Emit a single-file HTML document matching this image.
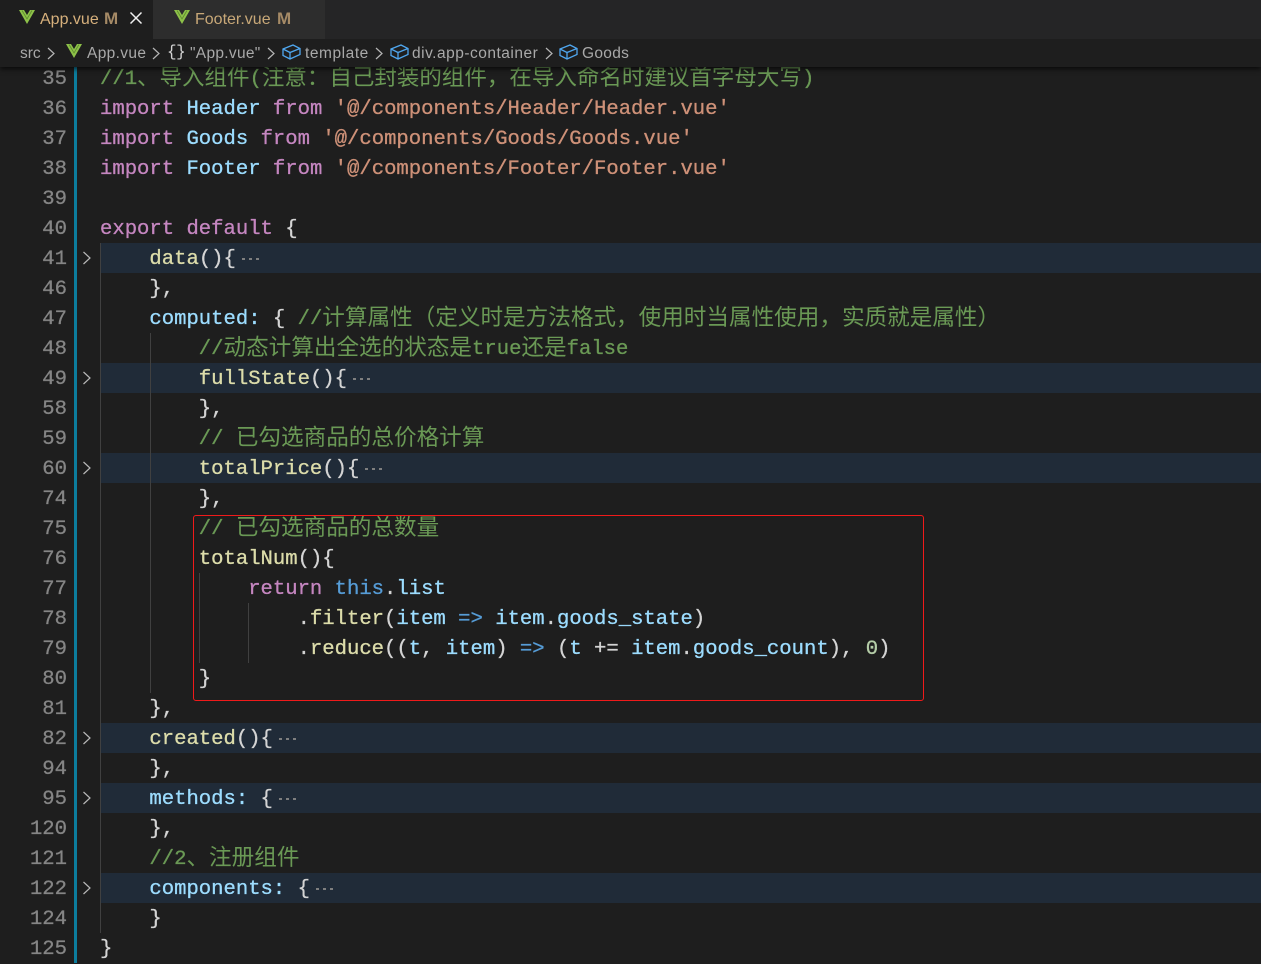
<!DOCTYPE html>
<html><head><meta charset="utf-8">
<style>
html,body{margin:0;padding:0;background:#1e1e1e;}
#r{position:relative;width:1261px;height:964px;overflow:hidden;background:#1e1e1e;}
.l{position:absolute;left:100px;height:30px;line-height:30px;margin-top:2px;white-space:pre;font-family:"Liberation Mono",monospace;font-size:20.58px;color:#d4d4d4;z-index:3;-webkit-text-stroke:.3px;}
.c{position:relative;top:1px;font-family:"Liberation Sans","Noto Sans CJK SC",sans-serif;font-size:22.6px;line-height:22px;-webkit-text-stroke:0;}
.n{position:absolute;left:0;width:67px;text-align:right;height:30px;line-height:30px;margin-top:2px;font-family:"Liberation Mono",monospace;font-size:20.58px;color:#858585;z-index:3;-webkit-text-stroke:.3px;}
.f{position:absolute;left:100px;right:0;height:30px;background:#202b38;z-index:1;}
.g{position:absolute;width:1px;background:#404040;z-index:2;}
.k{color:#c586c0}.v{color:#9cdcfe}.y{color:#dcdcaa}.s{color:#ce9178}.m{color:#6a9955}.b{color:#569cd6}.u{color:#b5cea8}
.d{position:absolute;width:18px;height:2px;background:repeating-linear-gradient(90deg,#7f7f7f 0,#7f7f7f 3px,transparent 3px,transparent 7px);z-index:3;}
.ch{position:absolute;z-index:3;}
#tabs{position:absolute;left:0;top:0;width:1261px;height:39px;background:#252526;z-index:6;}
.tab{position:absolute;top:0;height:39px;}
#bc{position:absolute;left:0;top:39px;width:1261px;height:28px;background:#1e1e1e;box-shadow:0 2px 5px rgba(0,0,0,.7);z-index:5;}
.t{position:absolute;font-family:"Liberation Sans",sans-serif;white-space:pre;}
.bt{font-size:15.5px;color:#a9a9a9;top:5px;line-height:20px;}
svg{position:absolute;overflow:visible;}
#box{position:absolute;left:193px;top:515px;width:729px;height:184px;border:1px solid #f01a1a;border-radius:3px;z-index:4;}
#bar{position:absolute;left:74px;top:63px;width:3px;height:900px;background:#0c7d9d;z-index:2;}
</style></head><body><div id="r">

<div id="tabs">
<div class="tab" style="left:0;width:153px;background:#1e1e1e"></div>
<div class="tab" style="left:153px;width:172px;background:#2d2d2d"></div>
<svg style="left:19px;top:10px" width="16" height="14" viewBox="0 0 16 14"><polygon points="0,0 5,0 8,5 11,0 16,0 8,14" fill="#8dc149"/><polyline points="3,0.5 8,9 13,0.5" fill="none" stroke="#5e8a2e" stroke-width=".8"/></svg>
<div class="t" style="left:40px;top:10px;font-size:16px;line-height:20px;color:#d6b07c">App.vue</div>
<div class="t" style="left:104px;top:9px;font-size:17px;line-height:20px;color:#a58a66;font-weight:bold">M</div>
<svg style="left:130px;top:12px" width="12" height="12" viewBox="0 0 12 12"><path d="M.5 .5L11.5 11.5M11.5 .5L.5 11.5" stroke="#f0f0f0" stroke-width="1.5" fill="none"/></svg>
<svg style="left:174px;top:10px" width="16" height="14" viewBox="0 0 16 14"><polygon points="0,0 5,0 8,5 11,0 16,0 8,14" fill="#8dc149"/><polyline points="3,0.5 8,9 13,0.5" fill="none" stroke="#5e8a2e" stroke-width=".8"/></svg>
<div class="t" style="left:195px;top:10px;font-size:16px;line-height:20px;color:#c8a878">Footer.vue</div>
<div class="t" style="left:277px;top:9px;font-size:17px;line-height:20px;color:#a58a66;font-weight:bold">M</div>
</div>

<div id="bc">
<div class="t bt" style="left:20px">src</div>
<svg style="left:47px;top:8px" width="8" height="13" viewBox="0 0 8 13"><path d="M1 1L7 6.5L1 12" fill="none" stroke="#b5b5b5" stroke-width="1.2"/></svg>
<svg style="left:66px;top:5px" width="16" height="14" viewBox="0 0 16 14"><polygon points="0,0 5,0 8,5 11,0 16,0 8,14" fill="#8dc149"/><polyline points="3,0.5 8,9 13,0.5" fill="none" stroke="#5e8a2e" stroke-width=".8"/></svg>
<div class="t bt" style="left:87px;letter-spacing:.35px">App.vue</div>
<svg style="left:152px;top:8px" width="8" height="13" viewBox="0 0 8 13"><path d="M1 1L7 6.5L1 12" fill="none" stroke="#b5b5b5" stroke-width="1.2"/></svg>
<div class="t" style="left:167px;top:3px;font-size:16px;line-height:20px;color:#d4d4d4;font-family:'Liberation Mono',monospace;letter-spacing:-.5px">{}</div>
<div class="t bt" style="left:190px;letter-spacing:.3px">"App.vue"</div>
<svg style="left:267px;top:8px" width="8" height="13" viewBox="0 0 8 13"><path d="M1 1L7 6.5L1 12" fill="none" stroke="#b5b5b5" stroke-width="1.2"/></svg>
<svg style="left:282px;top:5px" width="19" height="16" viewBox="0 0 19 16"><path d="M1 5L11 1L18 4.5V10.5L8 15L1 11.5ZM1 5L8 8.5L18 4.5M8 8.5V15" fill="none" stroke="#4fa6ee" stroke-width="1.3"/></svg>
<div class="t bt" style="left:305px;letter-spacing:.55px">template</div>
<svg style="left:375px;top:8px" width="8" height="13" viewBox="0 0 8 13"><path d="M1 1L7 6.5L1 12" fill="none" stroke="#b5b5b5" stroke-width="1.2"/></svg>
<svg style="left:390px;top:5px" width="19" height="16" viewBox="0 0 19 16"><path d="M1 5L11 1L18 4.5V10.5L8 15L1 11.5ZM1 5L8 8.5L18 4.5M8 8.5V15" fill="none" stroke="#4fa6ee" stroke-width="1.3"/></svg>
<div class="t bt" style="left:412px;letter-spacing:.5px">div.app-container</div>
<svg style="left:545px;top:8px" width="8" height="13" viewBox="0 0 8 13"><path d="M1 1L7 6.5L1 12" fill="none" stroke="#b5b5b5" stroke-width="1.2"/></svg>
<svg style="left:559px;top:5px" width="19" height="16" viewBox="0 0 19 16"><path d="M1 5L11 1L18 4.5V10.5L8 15L1 11.5ZM1 5L8 8.5L18 4.5M8 8.5V15" fill="none" stroke="#4fa6ee" stroke-width="1.3"/></svg>
<div class="t bt" style="left:582px;letter-spacing:.3px">Goods</div>
</div>

<div id="bar"></div>

<div class="f" style="top:243px"></div>
<div class="f" style="top:363px"></div>
<div class="f" style="top:453px"></div>
<div class="f" style="top:723px"></div>
<div class="f" style="top:783px"></div>
<div class="f" style="top:873px"></div>

<div class="g" style="left:100px;top:243px;height:690px"></div>
<div class="g" style="left:150px;top:333px;height:360px"></div>
<div class="g" style="left:199px;top:573px;height:90px"></div>
<div class="g" style="left:248px;top:603px;height:60px"></div>

<svg class="ch" style="left:82px;top:250px" width="9" height="16" viewBox="0 0 9 16"><path d="M1.5 2L8 8L1.5 14" fill="none" stroke="#b8b8b8" stroke-width="1.2"/></svg>
<svg class="ch" style="left:82px;top:370px" width="9" height="16" viewBox="0 0 9 16"><path d="M1.5 2L8 8L1.5 14" fill="none" stroke="#b8b8b8" stroke-width="1.2"/></svg>
<svg class="ch" style="left:82px;top:460px" width="9" height="16" viewBox="0 0 9 16"><path d="M1.5 2L8 8L1.5 14" fill="none" stroke="#b8b8b8" stroke-width="1.2"/></svg>
<svg class="ch" style="left:82px;top:730px" width="9" height="16" viewBox="0 0 9 16"><path d="M1.5 2L8 8L1.5 14" fill="none" stroke="#b8b8b8" stroke-width="1.2"/></svg>
<svg class="ch" style="left:82px;top:790px" width="9" height="16" viewBox="0 0 9 16"><path d="M1.5 2L8 8L1.5 14" fill="none" stroke="#b8b8b8" stroke-width="1.2"/></svg>
<svg class="ch" style="left:82px;top:880px" width="9" height="16" viewBox="0 0 9 16"><path d="M1.5 2L8 8L1.5 14" fill="none" stroke="#b8b8b8" stroke-width="1.2"/></svg>

<div class="d" style="left:242px;top:258px"></div>
<div class="d" style="left:353px;top:378px"></div>
<div class="d" style="left:365px;top:468px"></div>
<div class="d" style="left:279px;top:738px"></div>
<div class="d" style="left:279px;top:798px"></div>
<div class="d" style="left:316px;top:888px"></div>

<div class="n" style="top:63px">35</div><div class="l" style="top:63px"><span class="m">//1<span class="c" style="font-size:22.5px">、导入组件</span>(<span class="c" style="font-size:22.5px">注意：自己封装的组件，在导入命名时建议首字母大写</span>)</span></div>
<div class="n" style="top:93px">36</div><div class="l" style="top:93px"><span class="k">import</span> <span class="v">Header</span> <span class="k">from</span> <span class="s">'@/components/Header/Header.vue'</span></div>
<div class="n" style="top:123px">37</div><div class="l" style="top:123px"><span class="k">import</span> <span class="v">Goods</span> <span class="k">from</span> <span class="s">'@/components/Goods/Goods.vue'</span></div>
<div class="n" style="top:153px">38</div><div class="l" style="top:153px"><span class="k">import</span> <span class="v">Footer</span> <span class="k">from</span> <span class="s">'@/components/Footer/Footer.vue'</span></div>
<div class="n" style="top:183px">39</div>
<div class="n" style="top:213px">40</div><div class="l" style="top:213px"><span class="k">export</span> <span class="k">default</span> {</div>
<div class="n" style="top:243px">41</div><div class="l" style="top:243px">    <span class="y">data</span>(){</div>
<div class="n" style="top:273px">46</div><div class="l" style="top:273px">    },</div>
<div class="n" style="top:303px">47</div><div class="l" style="top:303px">    <span class="v">computed:</span> { <span class="m">//<span class="c">计算属性（定义时是方法格式，使用时当属性使用，实质就是属性）</span></span></div>
<div class="n" style="top:333px">48</div><div class="l" style="top:333px">        <span class="m">//<span class="c">动态计算出全选的状态是</span>true<span class="c">还是</span>false</span></div>
<div class="n" style="top:363px">49</div><div class="l" style="top:363px">        <span class="y">fullState</span>(){</div>
<div class="n" style="top:393px">58</div><div class="l" style="top:393px">        },</div>
<div class="n" style="top:423px">59</div><div class="l" style="top:423px">        <span class="m">// <span class="c">已勾选商品的总价格计算</span></span></div>
<div class="n" style="top:453px">60</div><div class="l" style="top:453px">        <span class="y">totalPrice</span>(){</div>
<div class="n" style="top:483px">74</div><div class="l" style="top:483px">        },</div>
<div class="n" style="top:513px">75</div><div class="l" style="top:513px">        <span class="m">// <span class="c">已勾选商品的总数量</span></span></div>
<div class="n" style="top:543px">76</div><div class="l" style="top:543px">        <span class="y">totalNum</span>(){</div>
<div class="n" style="top:573px">77</div><div class="l" style="top:573px">            <span class="k">return</span> <span class="b">this</span>.<span class="v">list</span></div>
<div class="n" style="top:603px">78</div><div class="l" style="top:603px">                .<span class="y">filter</span>(<span class="v">item</span> <span class="b">=&gt;</span> <span class="v">item</span>.<span class="v">goods_state</span>)</div>
<div class="n" style="top:633px">79</div><div class="l" style="top:633px">                .<span class="y">reduce</span>((<span class="v">t</span>, <span class="v">item</span>) <span class="b">=&gt;</span> (<span class="v">t</span> += <span class="v">item</span>.<span class="v">goods_count</span>), <span class="u">0</span>)</div>
<div class="n" style="top:663px">80</div><div class="l" style="top:663px">        }</div>
<div class="n" style="top:693px">81</div><div class="l" style="top:693px">    },</div>
<div class="n" style="top:723px">82</div><div class="l" style="top:723px">    <span class="y">created</span>(){</div>
<div class="n" style="top:753px">94</div><div class="l" style="top:753px">    },</div>
<div class="n" style="top:783px">95</div><div class="l" style="top:783px">    <span class="v">methods:</span> {</div>
<div class="n" style="top:813px">120</div><div class="l" style="top:813px">    },</div>
<div class="n" style="top:843px">121</div><div class="l" style="top:843px">    <span class="m">//2<span class="c">、注册组件</span></span></div>
<div class="n" style="top:873px">122</div><div class="l" style="top:873px">    <span class="v">components:</span> {</div>
<div class="n" style="top:903px">124</div><div class="l" style="top:903px">    }</div>
<div class="n" style="top:933px">125</div><div class="l" style="top:933px">}</div>

<div id="box"></div>
</div></body></html>
